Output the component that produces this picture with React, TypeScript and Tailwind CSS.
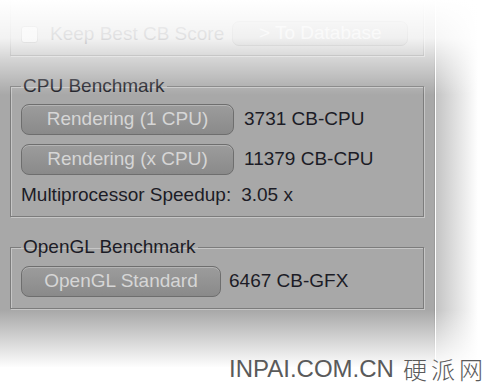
const font = "font-['Liberation_Sans','Arial',sans-serif]";

function GrayButton({ label, width }: { label: string; width: string }) {
    return (
        <div
            className={`${width} h-[31px] shrink-0 rounded-[8px] border border-[#6e6e6e] bg-gradient-to-b from-[#9c9c9c] to-[#8a8a8a] shadow-[inset_0_1px_0_#b4b4b4] flex items-center justify-center text-[19px] text-[#d6d6d6]`}
        >
            {label}
        </div>
    );
}

function Group({ title, children }: { title: string; children: React.ReactNode }) {
    return (
        <fieldset className="border border-[#7c7c7c] shadow-[1px_1px_0_#c6c6c6,inset_1px_1px_0_#c6c6c6] px-[10px] min-w-0">
            <legend className="px-[2px] text-[19px] leading-[20px] text-[#1c1c26]">{title}</legend>
            {children}
        </fieldset>
    );
}

export default function App() {
    return (
        <div className={`relative w-[500px] h-[391px] overflow-hidden bg-white ${font}`}>
            {/* window body */}
            <div className="w-[435px] h-[391px] bg-[#a8a8a8] border-r border-[#9a9a9a] px-[10px] flex flex-col">
                {/* previous group, mostly faded out */}
                <div className="h-[56px] border-x border-b border-[#7c7c7c] shadow-[1px_1px_0_#c6c6c6] flex items-end pb-[9px] pl-[10px]">
                    <div className="flex items-center h-[24px]">
                        <span className="w-[17px] h-[17px] rounded-[3px] border border-[#777] bg-[#d8d8d8]" />
                        <span className="ml-[12px] text-[19px] text-[#1c1c26] whitespace-nowrap">Keep Best CB Score</span>
                    </div>
                    <div className="ml-[8px] w-[176px] h-[25px] rounded-[7px] border border-[#6e6e6e] bg-[#959595] flex items-center justify-center text-[19px] text-[#d6d6d6]">
                        &gt; To Database
                    </div>
                </div>

                <div className="mt-[20px]">
                    <Group title="CPU Benchmark">
                        <div className="pt-[8px] pb-[10px] flex flex-col gap-[9px] text-[19px] text-[#1c1c26]">
                            <div className="flex items-center gap-[10px]">
                                <GrayButton label="Rendering (1 CPU)" width="w-[213px]" />
                                <span>3731 CB-CPU</span>
                            </div>
                            <div className="flex items-center gap-[10px]">
                                <GrayButton label="Rendering (x CPU)" width="w-[213px]" />
                                <span>11379 CB-CPU</span>
                            </div>
                            <div className="flex items-center h-[22px] gap-[10px]">
                                <span>Multiprocessor Speedup:</span>
                                <span>3.05 x</span>
                            </div>
                        </div>
                    </Group>
                </div>

                <div className="mt-[20px]">
                    <Group title="OpenGL Benchmark">
                        <div className="pt-[9px] pb-[11px] flex items-center gap-[8px] text-[19px] text-[#1c1c26]">
                            <GrayButton label="OpenGL Standard" width="w-[200px]" />
                            <span>6467 CB-GFX</span>
                        </div>
                    </Group>
                </div>
            </div>

            {/* drop shadow on the right */}
            <div className="absolute top-0 left-[436px] w-[42px] h-full bg-gradient-to-r from-[#c4c4c4] to-white" />

            {/* fades */}
            <div className="absolute top-0 left-0 w-full h-[95px] bg-[linear-gradient(to_bottom,rgba(255,255,255,1)_0px,rgba(255,255,255,0.86)_38px,rgba(255,255,255,0.5)_60px,rgba(255,255,255,0)_95px)]" />
            <div className="absolute top-[310px] left-0 w-full h-[58px] bg-[linear-gradient(to_bottom,rgba(255,255,255,0),rgba(255,255,255,1))]" />
            <div className="absolute top-[367px] left-0 w-full h-[24px] bg-white" />

            {/* watermark */}
            <div className="absolute left-[229px] top-[354px] text-[24px] leading-[30px] text-[#5a5a5a] whitespace-nowrap flex items-center">
                <span className="font-['Liberation_Sans',sans-serif]">INPAI.COM.CN</span>
                <span className="ml-[9px] tracking-[4px] font-['Noto_Sans_CJK_SC',sans-serif] font-light">硬派网</span>
            </div>
        </div>
    );
}
